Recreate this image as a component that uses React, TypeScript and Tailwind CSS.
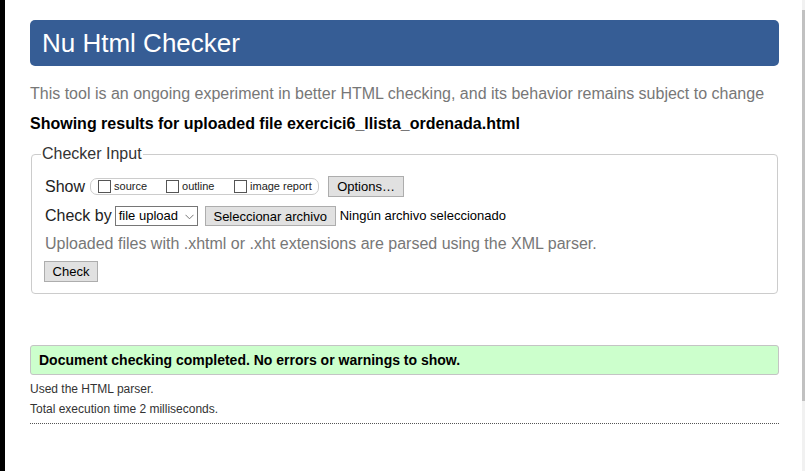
import React from "react";

const font = "font-['Liberation_Sans',Arial,sans-serif]";

function Box({ label, last }: { label: string; last?: boolean }): React.ReactElement {
  return (
    <span className={"flex items-center whitespace-nowrap " + (last ? "" : "w-[68px]")}>
      <span className="h-[13px] w-[13px] shrink-0 border border-[#555] bg-white" />
      <span className="ml-[3px] text-[11px] leading-[13px] text-[#222]">{label}</span>
    </span>
  );
}

function Btn({ children, className }: { children: React.ReactNode; className?: string }): React.ReactElement {
  return (
    <button
      type="button"
      className={
        "flex items-center justify-center border border-[#adadad] bg-[#e1e1e1] text-[13px] leading-none text-black " +
        (className ?? "")
      }
    >
      {children}
    </button>
  );
}

export default function App(): React.ReactElement {
  return (
    <div className={"flex h-[471px] w-[805px] overflow-hidden bg-white " + font}>
      <div className="w-[5px] shrink-0 bg-black" />
      <main className="flex-1 pl-[25px]">
        <div className="w-[749px]">
          <header className="mt-[20px] flex h-[46px] items-center rounded-[5px] bg-[#365d95] px-[12px]">
            <h1 className="text-[26px] leading-none text-white">Nu Html Checker</h1>
          </header>

          <p className="mt-[18px] text-[16px] leading-[20px] text-[#777]">
            This tool is an ongoing experiment in better HTML checking, and its behavior remains subject to change
          </p>
          <p className="mt-[10px] text-[16px] font-bold leading-[20px] text-black">
            Showing results for uploaded file exercici6_llista_ordenada.html
          </p>

          <fieldset className="mx-[1px] mt-[11px] rounded-[4px] border border-[#ccc] px-[13px] pb-[11px]">
            <legend className="-ml-[4px] px-[1px] text-[16px] leading-[18px] text-[#333]">Checker Input</legend>

            <div className="mt-[13px] flex h-[21px] items-center text-[16px] text-[#222]">
              <span>Show</span>
              <div className="ml-[5px] flex h-[17px] w-[229px] shrink-0 items-center rounded-[7px] border border-[#ccc] pl-[7px]">
                <Box label="source" />
                <Box label="outline" />
                <Box label="image report" last />
              </div>
              <Btn className="ml-[9px] h-[21px] w-[76px]">Options…</Btn>
            </div>

            <div className="mt-[9px] flex h-[20px] items-center text-[16px] text-[#222]">
              <span>Check by</span>
              <div className="ml-[3px] flex h-[20px] w-[83px] items-center justify-between border border-[#767676] bg-white pl-[3px] pr-[3px] text-[13px] text-black">
                <span>file upload</span>
                <svg width="9" height="6" viewBox="0 0 9 6" className="mt-[1px]">
                  <path d="M0.5 0.8 L4.5 4.8 L8.5 0.8" fill="none" stroke="#777" strokeWidth="1" />
                </svg>
              </div>
              <Btn className="ml-[7px] h-[20px] w-[131px]">Seleccionar archivo</Btn>
              <span className="ml-[4px] text-[13px] text-black">Ningún archivo seleccionado</span>
            </div>

            <p className="mt-[8px] text-[16px] leading-[20px] text-[#777]">
              Uploaded files with .xhtml or .xht extensions are parsed using the XML parser.
            </p>

            <Btn className="-ml-[1px] mt-[7px] h-[21px] w-[54px]">Check</Btn>
          </fieldset>

          <div className="mt-[51px] flex h-[30px] items-center rounded-[3px] border border-[#c4c4c4] bg-[#ccffcc] pl-[8px]">
            <p className="text-[14px] font-bold text-black">
              Document checking completed. No errors or warnings to show.
            </p>
          </div>

          <p className="mt-[4px] text-[12px] leading-[20px] text-[#333]">Used the HTML parser.</p>
          <p className="text-[12px] leading-[20px] text-[#333]">Total execution time 2 milliseconds.</p>
          <div className="mt-[4px] border-t border-dotted border-[#555]" />
        </div>
      </main>
      <div className="w-[3px] shrink-0 bg-[#f1f1f1]">
        <div className="mt-[10px] h-[391px] bg-[#c1c1c1]" />
      </div>
    </div>
  );
}
